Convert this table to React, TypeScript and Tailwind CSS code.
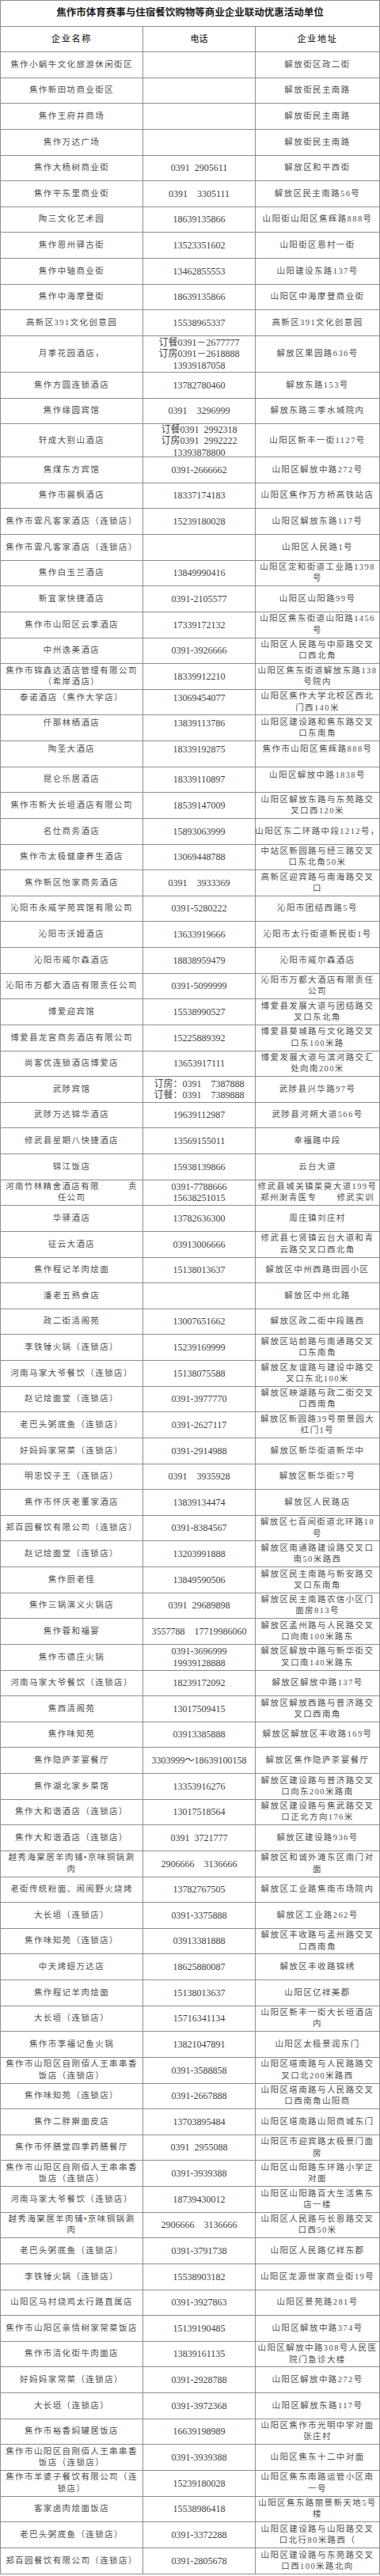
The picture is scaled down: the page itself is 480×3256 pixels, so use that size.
type Cell = string | string[];
type Row = { n: Cell; p?: Cell; a: Cell; h?: "m" | "l"; top?: string };

const rows: Row[] = [
  { n: "焦作小蜗牛文化旅游休闲街区", a: "解放街区政二街" },
  { n: "焦作新田坊商业街区", a: "解放街民主南路" },
  { n: "焦作王府井商场", a: "解放街民主南路" },
  { n: "焦作万达广场", a: "解放街民主南路" },
  { n: "焦作大杨树商业街", p: "0391  2905611", a: "解放区和平西街" },
  { n: "焦作平东里商业街", p: "0391    3305111", a: "解放区民主南路56号" },
  { n: "陶三文化艺术园", p: "18639135866", a: "山阳街山阳区焦辉路888号" },
  { n: "焦作恩州驿古街", p: "13523351602", a: "山阳街区恩村一街" },
  { n: "焦作中轴商业街", p: "13462855553", a: "山阳建设东路137号" },
  { n: "焦作中海摩登街", p: "18639135866", a: "山阳区中海摩登商业街" },
  { n: "高新区391文化创意园", p: "15538965337", a: "高新区391文化创意园" },
  { n: "月季花园酒店，", p: ["订餐0391－2677777", "订房0391－2618888", "13939187058"], a: "解放区果园路636号", h: "l" },
  { n: "焦作方圆连锁酒店", p: "13782780460", a: "解放东路153号" },
  { n: "焦作缘圆宾馆", p: "0391    3296999", a: "解放东路三季水城院内" },
  { n: "轩成大别山酒店", p: ["订餐0391  2992318", "订房0391  2992222", "13393878800"], a: "山阳区新丰一街1127号", h: "m" },
  { n: "焦煤东方宾馆", p: "0391-2666662", a: "山阳区解放中路272号" },
  { n: "焦作市麗枫酒店", p: "18337174183", a: "山阳区焦作万方桥高铁站店" },
  { n: "焦作市霏凡客家酒店（连锁店）", p: "15239180028", a: "山阳区解放东路117号" },
  { n: "焦作市霏凡客家酒店（连锁店）", a: "山阳区人民路1号" },
  { n: "焦作白玉兰酒店", p: "13849990416", a: ["山阳区定和街道工业路1398", "号"] },
  { n: "新宜家快捷酒店", p: "0391-2105577", a: "山阳区山阳路99号" },
  { n: "焦作市山阳区云季酒店", p: "17339172132", a: ["山阳区焦东街道山阳路1456", "号"] },
  { n: "中州逸美酒店", p: "0391-3926666", a: ["山阳区人民路与中原路交叉", "口西北角"] },
  { n: ["焦作市锦鑫达酒店管理有限公司", "（希岸酒店）"], p: "18339912210", a: ["山阳区焦东街道解放东路138", "号院内"] },
  { n: "泰诺酒店（焦作大学店）", p: "13069454077", a: ["山阳区焦作大学北校区西北", "门西140米"], top: "np" },
  { n: "仟那林栖酒店", p: "13839113786", a: ["山阳区建设路和焦东路交叉", "口东南角"], top: "np" },
  { n: "陶圣大酒店", p: "18339192875", a: "焦作市山阳区焦辉路888号", top: "npa" },
  { n: "昆仑乐居酒店", p: "18339110897", a: "山阳区解放中路1838号", top: "a" },
  { n: "焦作市新大长垣酒店有限公司", p: "18539147009", a: ["山阳区解放东路与东苑路交", "叉口西120米"] },
  { n: "名仕商务酒店", p: "15893063999", a: "山阳区东二环路中段1212号，" },
  { n: "焦作市太极健康养生酒店", p: "13069448788", a: ["中站区新园路与经三路交叉", "口东北角50米"] },
  { n: "焦作新区怡家商务酒店", p: "0391    3933369", a: ["高新区迎宾路与南海路交叉", "口"] },
  { n: "沁阳市永威学苑宾馆有限公司", p: "0391-5280222", a: "沁阳市团结西路5号" },
  { n: "沁阳市沃姆酒店", p: "13633919666", a: "沁阳市太行街道新民街1号" },
  { n: "沁阳市威尔森酒店", p: "18838959479", a: "沁阳市威尔森酒店" },
  { n: "沁阳市万都大酒店有限责任公司", p: "0391-5099999", a: ["沁阳市万都大酒店有限责任", "公司"] },
  { n: "博爱迎宾馆", p: "15538990527", a: ["博爱县发展大道与团结路交", "叉口东北角"] },
  { n: "博爱县龙宫商务酒店有限公司", p: "15225889392", a: ["博爱县葵城路与文化路交叉", "口东100米路"] },
  { n: "尚客优连锁酒店博爱店", p: "13653917111", a: ["博爱发展大道与滨河路交汇", "处向南200米"] },
  { n: "武陟宾馆", p: ["订房：0391    7387888", "订餐：0391    7389888"], a: "武陟县兴华路97号" },
  { n: "武陟万达锦华酒店", p: "19639112987", a: "武陟县河朔大道566号" },
  { n: "修武县星期八快捷酒店", p: "13569155011", a: "幸福路中段" },
  { n: "锦江饭店", p: "15938139866", a: "云台大道" },
  { n: ["河南竹林精舍酒店有限|责", "任公司"], p: ["0391-7788666", "15638251015"], a: ["修武县城关镇茱萸大道199号", "郑州澍青医专|修武实训"] },
  { n: "华驿酒店", p: "13782636300", a: "周庄镇刘庄村" },
  { n: "征云大酒店", p: "03913006666", a: ["修武县七贤镇云台大道和青", "云路交叉口西北角"] },
  { n: "焦作程记羊肉烩面", p: "15138013637", a: "解放区中州西路田园小区" },
  { n: "潘老五熟食店", a: "解放区中州北路" },
  { n: "政二街清阁苑", p: "13007651662", a: "解放区政二街中段路西" },
  { n: "李铁锤火锅（连锁店）", p: "15239169999", a: ["解放区站前路与南通路交叉", "口东南角"] },
  { n: "河南马家大爷餐饮（连锁店）", p: "15138075588", a: ["解放区友谊路与建设中路交", "叉口东北100米"] },
  { n: "赵记烩面堂（连锁店）", p: "0391-3977770", a: ["解放区映湖路与政二街交叉", "口西南角"] },
  { n: "老巴头粥底鱼（连锁店）", p: "0391-2627117", a: ["解放区新园路39号丽景园大", "红门1号"] },
  { n: "好妈妈家常菜（连锁店）", p: "0391-2914988", a: "解放区新华街道新华中" },
  { n: "明忠饺子王（连锁店）", p: "0391    3935928", a: "解放区新华街57号" },
  { n: "焦作市怀庆老董家酒店", p: "13839134474", a: "解放区人民路店" },
  { n: "郑百园餐饮有限公司（连锁店）", p: "0391-8384567", a: ["解放区七百间街道北环路18", "号"] },
  { n: "赵记烩面堂（连锁店）", p: "13203991888", a: ["解放区南通路建设路交叉口", "南50米路西"] },
  { n: "焦作厨老怪", p: "13849590506", a: ["解放区民主南路与新安路交", "叉口东南角"] },
  { n: "焦作三锅演义火锅店", p: "0391  29689898", a: ["解放区民主南路农信小区门", "面房813号"] },
  { n: "焦作蓉和福宴", p: "3557788    17719986060", a: ["解放区孟州路与人民路交叉", "口向南100米路东"] },
  { n: "焦作市德庄火锅", p: ["0391-3696999", "19939128888"], a: ["解放区解放中路与新华街交", "叉口南140米路东"] },
  { n: "河南马家大爷餐饮（连锁店）", p: "18239172092", a: "解放区解放中路137号" },
  { n: "焦西清阁苑", p: "13017509415", a: ["解放区解放西路与普济路交", "叉口西南角"] },
  { n: "焦作味知苑", p: "03913385888", a: "解放区解放区丰收路169号" },
  { n: "焦作隐庐茶宴餐厅", p: "3303999～18639100158", a: "解放区焦作隐庐茶宴餐厅" },
  { n: "焦作湖北家乡菜馆", p: "13353916276", a: ["解放区建设路与普济路交叉", "口向东200米路南"] },
  { n: "焦作大和谐酒店（连锁店）", p: "13017518564", a: ["解放区建设路与焦武路交叉", "口正北方向176米"] },
  { n: "焦作大和谐酒店（连锁店）", p: "0391  3721777", a: "解放区建设路936号" },
  { n: ["越秀海棠居羊肉铺•京味铜锅涮", "肉"], p: "2906666    3136666", a: ["解放区和诚外滩东区南门对", "面"] },
  { n: "老街传统粉面、闹闹野火烧烤", p: "13782767505", a: "解放区工业路焦南市场院内" },
  { n: "大长垣（连锁店）", p: "0391-3375888", a: "解放区工业路262号" },
  { n: "焦作味知苑（连锁店）", p: "03913381888", a: ["解放区丰收路与孟州路交叉", "口西南角"] },
  { n: "中天烤翅万达店", p: "18625880087", a: "解放区丰收路锦绣" },
  { n: "焦作程记羊肉烩面", p: "15138013637", a: "山阳区亿祥美郡" },
  { n: "大长垣（连锁店）", p: "15716341134", a: ["山阳区新丰一街大长垣酒店", "内"] },
  { n: "焦作市李福记鱼火锅", p: "13821047891", a: "山阳区太极景润东门" },
  { n: ["焦作市山阳区自刚佰人王串串香", "饭店（连锁店）"], p: "0391-3588858", a: ["山阳区塔南路与人民路路交", "叉口北200米路西"] },
  { n: "焦作味知苑（连锁店）", p: "0391-2667888", a: ["山阳区塔南路与人民路交叉", "口西南角山阳商"] },
  { n: "焦作二胖擀面皮店", p: "13703895484", a: "山阳区塔南路山阳商城东门" },
  { n: "焦作市怀膳堂四季药膳餐厅", p: "0391  2955088", a: ["山阳区市迎宾路太极景门面", "房"] },
  { n: ["焦作市山阳区自刚佰人王串串香", "饭店（连锁店）"], p: "0391-3939388", a: ["山阳区山阳路东环路小学正", "对面"] },
  { n: "河南马家大爷餐饮（连锁店）", p: "18739430012", a: ["山阳区山阳路百大生活焦东", "店一楼"] },
  { n: ["越秀海棠居羊肉铺•京味铜锅涮", "肉"], p: "2906666    3136666", a: ["山阳区人民路与长恩路交叉", "口西50米"] },
  { n: "老巴头粥底鱼（连锁店）", p: "0391-3791738", a: "山阳区人民路亿祥东郡" },
  { n: "李铁锤火锅（连锁店）", p: "15538903182", a: "山阳区龙源世家商业街19号" },
  { n: "山阳区马村烧鸡太行路直属店", p: "0391-3927863", a: "山阳区景苑路281号" },
  { n: "焦作市山阳区亲情树家常菜饭店", p: "15139190485", a: "山阳区解放中路374号" },
  { n: "焦作市清化街牛肉面店", p: "13839161135", a: ["山阳区解放中路308号人民医", "院门急诊大楼"] },
  { n: "好妈妈家常菜（连锁店）", p: "0391-2928788", a: "山阳区解放中路272号" },
  { n: "大长垣（连锁店）", p: "0391-3972368", a: "山阳区解放东路117号" },
  { n: "焦作市裕香焖罐居饭店", p: "16639198989", a: ["山阳区焦作市光明中学对面", "张庄村"] },
  { n: ["焦作市山阳区自刚佰人王串串香", "饭店（连锁店）"], p: "0391-3939388", a: "山阳区焦东十二中对面" },
  { n: ["焦作市羊婆子餐饮有限公司（连", "锁店）"], p: "15239180028", a: ["山阳区焦东南路运管小区南", "一号"] },
  { n: "客家卤肉烩面饭店", p: "15538986418", a: ["山阳区焦东路丽景新天地5号", "楼"] },
  { n: "老巴头粥底鱼（连锁店）", p: "0391-3372288", a: ["山阳区建设路与山阳路交叉", "口北行80米路西（"] },
  { n: "郑百园餐饮有限公司（连锁店）", p: "0391-2805678", a: ["山阳区建设路与东苑路交叉", "口西100米路北向"] },
];

function CellView({ v, top, phone, last }: { v?: Cell; top?: boolean; phone?: boolean; last?: boolean }) {
  const lines = Array.isArray(v) ? v : v ? [v] : [];
  return (
    <div
      className={`flex flex-col items-center ${top ? "justify-start pt-[3px]" : "justify-center"} ${last ? "" : "border-r border-[#8e8e8e]"} ${
        phone ? "text-[12px] text-[#3f3f3f]" : "text-[10.5px] tracking-[1.4px] text-[#505050]"
      }`}
    >
      {lines.map((l, i) =>
        l.includes("|") ? (
          <div key={i} className="flex w-full justify-between px-[6px] leading-[14.3px] whitespace-pre">
            {l.split("|").map((s, j) => (
              <span key={j}>{s}</span>
            ))}
          </div>
        ) : (
          <div key={i} className="leading-[14.3px] whitespace-pre">
            {l}
          </div>
        )
      )}
    </div>
  );
}

export default function App() {
  return (
    <div className="w-[480px] bg-white font-['Liberation_Serif','Noto_Sans_CJK_SC',serif]">
      <div className="border border-[#8e8e8e]">
        <div className="flex h-[32.5px] items-center justify-center border-b border-[#8e8e8e] text-[12.5px] font-bold text-[#1c1c1c]">
          焦作市体育赛事与住宿餐饮购物等商业企业联动优惠活动单位
        </div>
        <div className="grid h-[32.5px] grid-cols-[180px_142px_156px] border-b border-[#8e8e8e] text-[11px] font-medium text-[#333]">
          <div className="flex items-center justify-center border-r border-[#8e8e8e] tracking-[1.8px]">企业名称</div>
          <div className="flex items-center justify-center border-r border-[#8e8e8e]">电话</div>
          <div className="flex items-center justify-center tracking-[1.8px]">企业地址</div>
        </div>
        {rows.map((r, i) => (
          <div
            key={i}
            className={`grid grid-cols-[180px_142px_156px] ${i === rows.length - 1 ? "" : "border-b border-[#8e8e8e]"} ${
              r.h === "l" ? "h-[46px]" : r.h === "m" ? "h-[42px]" : "h-[32.64px]"
            }`}
          >
            <CellView v={r.n} top={r.top?.includes("n")} />
            <CellView v={r.p} top={r.top?.includes("p")} phone />
            <CellView v={r.a} top={r.top?.includes("a")} last />
          </div>
        ))}
      </div>
    </div>
  );
}
